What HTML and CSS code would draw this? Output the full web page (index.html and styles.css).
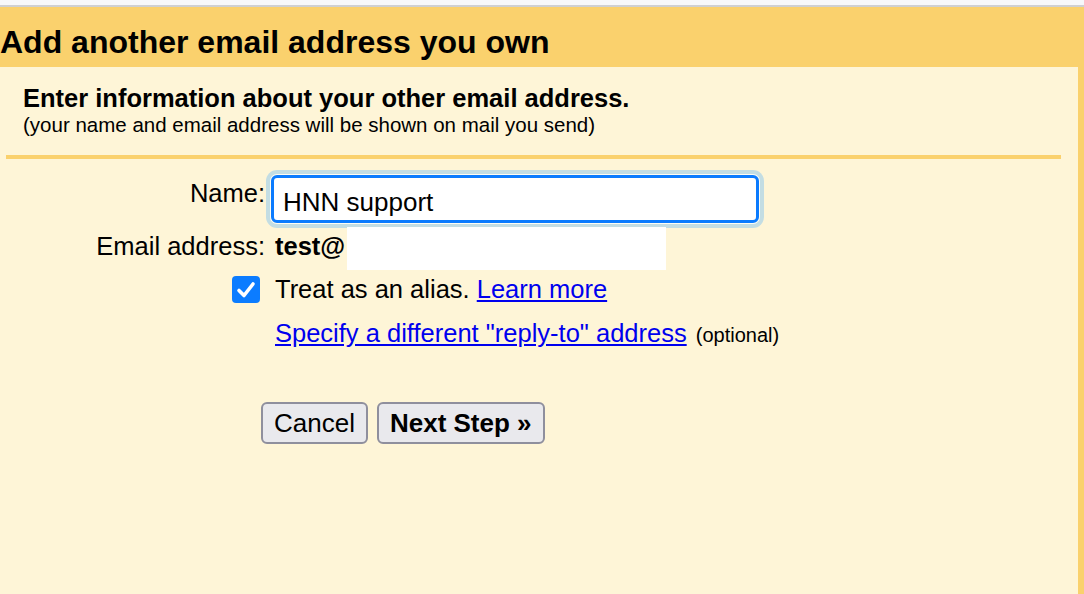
FILE: index.html
```html
<!DOCTYPE html>
<html lang="en">
<head>
    <meta charset="UTF-8">
    <title>Add another email address you own</title>
    <link rel="stylesheet" href="styles.css">
</head>
<body>
    <div class="dialog">
        <h1 class="dialog-title">Add another email address you own</h1>
        <div class="panel">
            <div class="intro">
                <div class="intro-heading">Enter information about your other email address.</div>
                <div class="intro-note">(your name and email address will be shown on mail you send)</div>
            </div>
            <div class="divider"></div>

            <div class="form">
                <div class="row row-name">
                    <label class="label" for="name">Name:</label>
                    <div class="value">
                        <input id="name" class="text-input" type="text" value="HNN support">
                    </div>
                </div>
                <div class="row row-email">
                    <div class="label">Email address:</div>
                    <div class="value email-value">
                        <b class="email-local">test@</b><span class="redact"></span>
                    </div>
                </div>
                <div class="row row-alias">
                    <div class="label">
                        <span class="checkbox">
                            <svg width="24" height="24" viewBox="0 0 24 24"><path d="M5 12.5 L10 17.5 L19 6" fill="none" stroke="#fff" stroke-width="3.6" stroke-linecap="round" stroke-linejoin="round"/></svg>
                        </span>
                    </div>
                    <div class="value">Treat as an alias. <a href="#">Learn more</a></div>
                </div>
                <div class="row row-reply">
                    <div class="label"></div>
                    <div class="value"><a href="#">Specify a different "reply-to" address</a> <span class="optional">(optional)</span></div>
                </div>
                <div class="buttons">
                    <button type="button" class="btn">Cancel</button>
                    <button type="button" class="btn btn-next">Next Step &raquo;</button>
                </div>
            </div>
        </div>
    </div>
</body>
</html>
```

FILE: styles.css
```css
body {
    margin: 0;
    padding-top: 5px;
    background: #f7f8fa;
    font-family: 'Liberation Sans', Arial, sans-serif;
    color: #000;
}

.dialog {
    border-top: 2px solid #cfd0d2;
    background: #fad16d;
    padding-right: 6px;
    min-height: 587px;
    box-sizing: border-box;
}

.dialog-title {
    margin: 0;
    font-size: 32px;
    line-height: 36px;
    font-weight: bold;
    padding: 17px 0 7px 0;
}

.panel {
    background: #fef5d7;
    min-height: 527px;
    padding-top: 17px;
    box-sizing: border-box;
}

.intro {
    padding: 0 23px;
}

.intro-heading {
    font-size: 25.5px;
    line-height: 29px;
    font-weight: bold;
}

.intro-note {
    font-size: 20.5px;
    line-height: 24px;
}

.divider {
    height: 4px;
    background: #fad16d;
    margin: 18px 17px 0 6px;
}

.form {
    padding-top: 16px;
}

.row {
    display: flex;
    align-items: flex-start;
}

.label {
    width: 265px;
    flex-shrink: 0;
    text-align: right;
    font-size: 25.5px;
    line-height: 29px;
}

.value {
    padding-left: 10px;
    font-size: 25.5px;
    line-height: 29px;
}

.row-name .label {
    padding-top: 4px;
}

.text-input {
    margin-left: -4px;
    width: 488px;
    height: 48px;
    box-sizing: border-box;
    border: 3px solid #0b7bfe;
    border-radius: 6px;
    padding: 7px 9px 0 9px;
    font-family: 'Liberation Sans', Arial, sans-serif;
    font-size: 26px;
    color: #000;
    background: #fff;
    outline: none;
    box-shadow: 0 0 0 1px #fffdf3, 0 0 0 5px #c3dde3;
}

.row-email {
    margin-top: 4px;
}

.row-email .label {
    padding-top: 5px;
}

.email-value {
    display: flex;
}

.email-local {
    padding-top: 5px;
}

.redact {
    display: block;
    width: 319px;
    height: 43px;
    background: #fff;
    margin-left: 2px;
}

.row-alias {
    margin-top: 5px;
}

.row-alias .label {
    display: flex;
    justify-content: flex-end;
}

.checkbox {
    width: 28px;
    height: 27px;
    margin-top: 1px;
    margin-right: 5px;
    background: #0b7cff;
    border-radius: 4px;
    display: flex;
    align-items: center;
    justify-content: center;
}

a {
    color: #0000ee;
}

.row-reply {
    margin-top: 15px;
}

.optional {
    font-size: 20px;
    margin-left: 2px;
}

.buttons {
    display: flex;
    gap: 9px;
    padding-left: 261px;
    margin-top: 52px;
}

.btn {
    height: 42px;
    padding: 0 11px;
    font-family: 'Liberation Sans', Arial, sans-serif;
    font-size: 26px;
    color: #000;
    background: #e9e9ed;
    border: 2px solid #8f8f9d;
    border-radius: 6px;
}

.btn-next {
    font-weight: bold;
}
```
